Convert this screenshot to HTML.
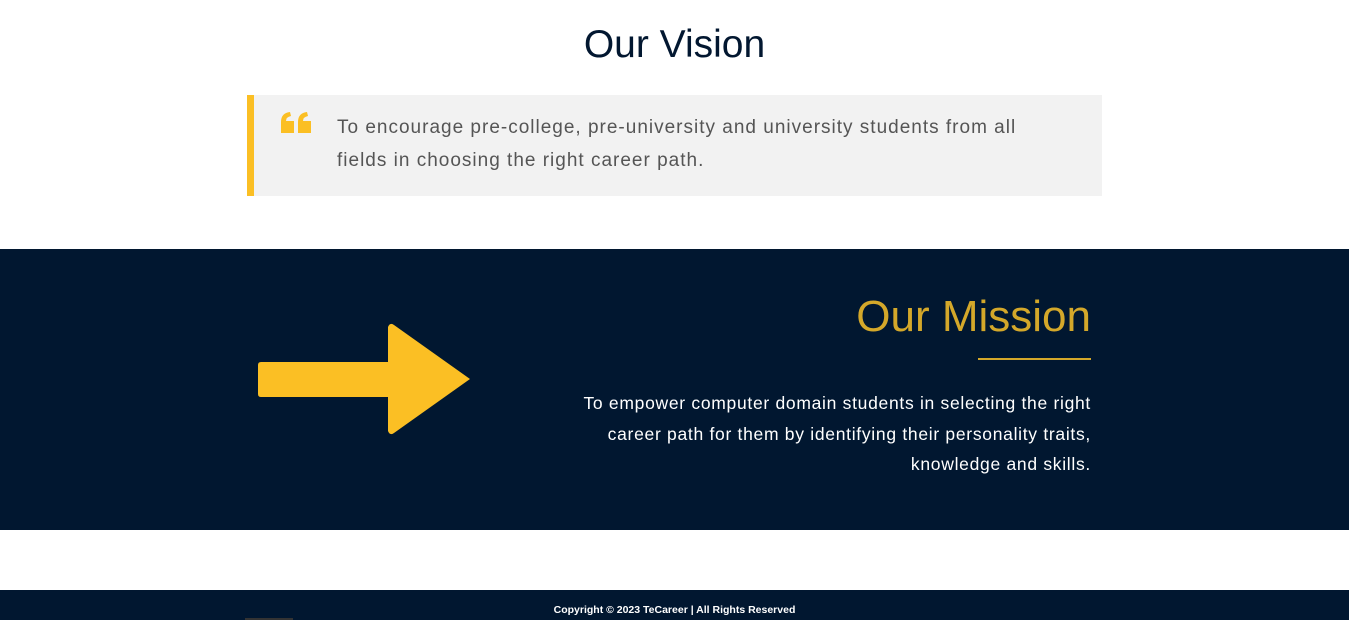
<!DOCTYPE html>
<html><head><style>
body{margin:0;width:1349px;height:620px;overflow:hidden;background:#fff;font-family:"Liberation Sans",sans-serif;position:relative}
.a{position:absolute}
</style></head><body>
<div class="a" style="left:0;width:1349px;top:23px;text-align:center;font-size:39px;color:#021730">Our Vision</div>
<div class="a" style="left:247px;top:95px;width:855px;height:101px;background:#f2f2f2;border-left:7px solid #fbbf24;box-sizing:border-box"></div>
<svg class="a" style="left:280px;top:110px" width="32" height="24" viewBox="0 0 32 24"><path d="M1 12 Q1 3 10 2 L11 6 Q6 7 6 11 L14 11 L14 23 L1 23 Z M18 12 Q18 3 27 2 L28 6 Q23 7 23 11 L31 11 L31 23 L18 23 Z" fill="#fbbf24"/></svg>
<div class="a" style="left:337px;top:111px;width:760px;font-size:19px;line-height:33px;color:#555;letter-spacing:1px;white-space:nowrap">To encourage pre-college, pre-university and university students from all<br>fields in choosing the right career path.</div>
<div class="a" style="left:0;top:249px;width:1349px;height:281px;background:#011730"></div>
<svg class="a" style="left:257px;top:322px" width="215" height="115" viewBox="0 0 215 115"><path d="M4 40 L131 40 L131 5 Q133 0 137 3 L213 57 L137 111 Q133 114 131 109 L131 75 L4 75 Q1 75 1 72 L1 43 Q1 40 4 40Z" fill="#fbbf24"/></svg>
<div class="a" style="left:600px;top:292px;width:491px;text-align:right;font-size:44px;color:#d4a82a">Our Mission</div>
<div class="a" style="left:978px;top:358px;width:113px;height:2px;background:#d4a82a"></div>
<div class="a" style="left:500px;top:388px;width:591px;text-align:right;font-size:17.5px;line-height:30.5px;color:#fff;letter-spacing:0.7px;white-space:nowrap">To empower computer domain students in selecting the right<br>career path for them by identifying their personality traits,<br>knowledge and skills.</div>
<div class="a" style="left:0;top:590px;width:1349px;height:30px;background:#011730"></div>
<div class="a" style="left:0;top:604px;width:1349px;text-align:center;font-size:10.5px;color:#fff;font-weight:bold">Copyright © 2023 TeCareer | All Rights Reserved</div>
<div class="a" style="left:245px;top:618px;width:48px;height:2px;background:#333"></div>
</body></html>
